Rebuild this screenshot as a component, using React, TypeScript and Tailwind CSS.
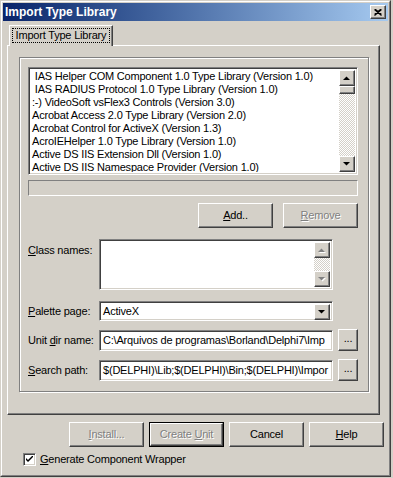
import React from "react";

const raised =
  "border border-t-white border-l-white border-r-[#404040] border-b-[#404040] shadow-[inset_-1px_-1px_#808080] bg-[#d4d0c8]";
const sunken =
  "border border-t-[#808080] border-l-[#808080] border-r-white border-b-white shadow-[inset_1px_1px_#404040,inset_-1px_-1px_#d4d0c8]";
const checker =
  "bg-[conic-gradient(#ffffff_25%,#d4d0c8_0_50%,#ffffff_0_75%,#d4d0c8_0)] bg-size-[2px_2px]";
const disabledText = "text-[#808080] [text-shadow:1px_1px_0_#ffffff]";

function Arrow({ dir, disabled }: { dir: "up" | "down"; disabled?: boolean }) {
  const pts = dir === "up" ? "0,4 7,4 3.5,0.5" : "0,0 7,0 3.5,3.5";
  return (
    <svg width="8" height="5" viewBox="0 0 8 5" className="block">
      {disabled && <polygon points={pts} fill="#ffffff" transform="translate(1,1)" />}
      <polygon points={pts} fill={disabled ? "#808080" : "#000000"} />
    </svg>
  );
}

function ScrollBtn({ dir, disabled, h = 16 }: { dir: "up" | "down"; disabled?: boolean; h?: number }) {
  return (
    <div
      className={`${raised} w-[16px] flex items-center justify-center shrink-0`}
      style={{ height: h }}
    >
      <Arrow dir={dir} disabled={disabled} />
    </div>
  );
}

function Btn({
  children,
  disabled,
  isDefault,
  w = 75,
  h = 25,
}: {
  children: React.ReactNode;
  disabled?: boolean;
  isDefault?: boolean;
  w?: number;
  h?: number;
}) {
  const inner = (
    <div
      className={`${raised} flex items-center justify-center ${disabled ? disabledText : "text-black"} w-full h-full`}
    >
      {children}
    </div>
  );
  return (
    <div
      className={`shrink-0 ${isDefault ? "border border-black" : ""}`}
      style={{ width: w, height: h }}
    >
      {inner}
    </div>
  );
}

const items = [
  "\u00a0IAS Helper COM Component 1.0 Type Library (Version 1.0)",
  "\u00a0IAS RADIUS Protocol 1.0 Type Library (Version 1.0)",
  ":-) VideoSoft vsFlex3 Controls (Version 3.0)",
  "Acrobat Access 2.0 Type Library (Version 2.0)",
  "Acrobat Control for ActiveX (Version 1.3)",
  "AcroIEHelper 1.0 Type Library (Version 1.0)",
  "Active DS IIS Extension Dll (Version 1.0)",
  "Active DS IIS Namespace Provider (Version 1.0)",
  "Active DS Type Library (Version 1.0)",
];

export default function App() {
  return (
    <div className="w-[393px] h-[478px] bg-[#d4d0c8] font-['Liberation_Sans',Arial,sans-serif] text-[11px] leading-[13px] tracking-[-0.2px] text-black overflow-hidden">
      <div className="w-[391px] h-[477px] border border-t-[#d4d0c8] border-l-[#d4d0c8] border-r-[#404040] border-b-[#404040]">
        <div className="w-full h-full border border-t-white border-l-white border-r-[#808080] border-b-[#808080] p-px flex flex-col">
          {/* Title bar */}
          <div className="h-[18px] shrink-0 bg-linear-to-r from-[#0a246a] to-[#a6caf0] flex items-center pl-[2px] pr-[2px]">
            <span className="font-bold text-white text-[12px] tracking-normal flex-1">Import Type Library</span>
            <div className={`${raised} w-[16px] h-[14px] flex items-center justify-center`}>
              <svg width="8" height="7" viewBox="0 0 8 7">
                <path d="M0.5 0.5 L7.5 6.5 M1.5 0.5 L7.5 5.5 M7.5 0.5 L0.5 6.5 M6.5 0.5 L0.5 5.5" stroke="#000" strokeWidth="1.2" />
              </svg>
            </div>
          </div>

          {/* Client */}
          <div className="flex flex-col pl-[4px] pt-[4px]">
            {/* Tab strip */}
            <div className="h-[20px] flex items-end relative z-10">
              <div className="ml-[2px] w-[104px] h-[21px] -mb-px bg-[#d4d0c8] border-t border-l border-r border-t-white border-l-white border-r-[#404040] shadow-[inset_-1px_0_#808080] flex items-center justify-center">
                <span className="outline outline-1 outline-dotted outline-black px-[3px] leading-[13px] -mt-[2px]">
                  Import Type Library
                </span>
              </div>
            </div>
            {/* Page */}
            <div className="w-[373px] h-[370px] border border-t-white border-l-white border-r-[#404040] border-b-[#404040] shadow-[inset_-1px_-1px_#808080] pl-[11px] pt-[11px]">
              {/* Group frame */}
              <div className="w-[350px] h-[335px] border border-[#808080] shadow-[inset_1px_1px_#ffffff,1px_1px_#ffffff] pl-[8px] pt-[9px] flex flex-col">
                {/* Listbox */}
                <div className={`${sunken} bg-white w-[330px] h-[108px] p-[2px] flex`}>
                  <div className="flex-1 overflow-hidden whitespace-nowrap">
                    {items.map((t, i) => (
                      <div key={i} className="h-[13px] leading-[13px] pl-[1px]">
                        {t}
                      </div>
                    ))}
                  </div>
                  <div className="w-[16px] flex flex-col">
                    <ScrollBtn dir="up" />
                    <div className={`${raised} w-[16px] h-[8px]`} />
                    <div className={`flex-1 ${checker}`} />
                    <ScrollBtn dir="down" />
                  </div>
                </div>
                {/* status panel */}
                <div className="mt-[5px] w-[330px] h-[16px] border border-t-[#808080] border-l-[#808080] border-r-white border-b-white" />
                {/* Add / Remove */}
                <div className="mt-[7px] w-[330px] flex justify-end gap-[10px]">
                  <Btn>
                    <span>
                      <u>A</u>dd..
                    </span>
                  </Btn>
                  <Btn disabled>
                    <span>
                      <u>R</u>emove
                    </span>
                  </Btn>
                </div>
                {/* Class names */}
                <div className="mt-[11px] flex">
                  <div className="w-[71px] pt-[5px]">
                    <u>C</u>lass names:
                  </div>
                  <div className={`${sunken} bg-white w-[234px] h-[51px] p-[2px] flex`}>
                    <div className="flex-1" />
                    <div className="w-[16px] flex flex-col">
                      <ScrollBtn dir="up" disabled />
                      <div className={`flex-1 ${checker}`} />
                      <ScrollBtn dir="down" disabled />
                    </div>
                  </div>
                </div>
                {/* Palette page */}
                <div className="mt-[11px] flex items-center h-[20px]">
                  <div className="w-[71px]">
                    <u>P</u>alette page:
                  </div>
                  <div className={`${sunken} bg-white w-[234px] h-[20px] p-[2px] flex items-stretch`}>
                    <div className="flex-1 pl-[1px] leading-[14px]">ActiveX</div>
                    <ScrollBtn dir="down" h={16} />
                  </div>
                </div>
                {/* Unit dir name */}
                <div className="mt-[8px] flex items-center h-[22px]">
                  <div className="w-[71px]">
                    Unit <u>d</u>ir name:
                  </div>
                  <div className={`${sunken} bg-white w-[234px] h-[21px] px-[3px] flex items-center overflow-hidden whitespace-nowrap`}>
                    C:\Arquivos de programas\Borland\Delphi7\Imp
                  </div>
                  <div className="ml-[5px]">
                    <Btn w={20} h={22}>
                      <span className="-mt-[3px]">...</span>
                    </Btn>
                  </div>
                </div>
                {/* Search path */}
                <div className="mt-[8px] flex items-center h-[22px]">
                  <div className="w-[71px]">
                    <u>S</u>earch path:
                  </div>
                  <div className={`${sunken} bg-white w-[234px] h-[21px] px-[3px] flex items-center overflow-hidden whitespace-nowrap`}>
                    $(DELPHI)\Lib;$(DELPHI)\Bin;$(DELPHI)\Impor
                  </div>
                  <div className="ml-[5px]">
                    <Btn w={20} h={22}>
                      <span className="-mt-[3px]">...</span>
                    </Btn>
                  </div>
                </div>
              </div>
            </div>

            {/* Bottom buttons */}
            <div className="mt-[7px] pl-[62px] flex gap-[5px]">
              <Btn disabled>
                <span>
                  <u>I</u>nstall...
                </span>
              </Btn>
              <Btn disabled isDefault>
                <span>
                  Create <u>U</u>nit
                </span>
              </Btn>
              <Btn>Cancel</Btn>
              <Btn>
                <span>
                  <u>H</u>elp
                </span>
              </Btn>
            </div>

            {/* Checkbox */}
            <div className="mt-[5px] pl-[16px] flex items-center h-[15px]">
              <div className={`${sunken} bg-white w-[13px] h-[13px] flex items-center justify-center`}>
                <svg width="7" height="7" viewBox="0 0 7 7" className="block">
                  <path d="M0 2 L0 4 L2 6 L7 1 L7 -1 L2 4 Z" fill="#000" />
                </svg>
              </div>
              <span className="ml-[4px]">
                <u>G</u>enerate Component Wrapper
              </span>
            </div>
          </div>
        </div>
      </div>
    </div>
  );
}
